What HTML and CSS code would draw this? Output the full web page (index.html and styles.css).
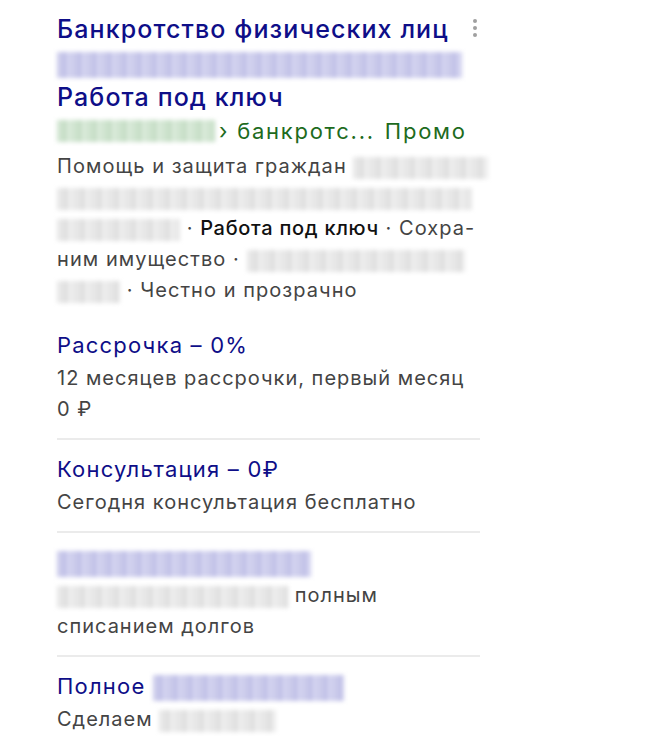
FILE: index.html
```html
<!DOCTYPE html>
<html lang="ru">
<head>
<meta charset="utf-8">
<link rel="stylesheet" href="styles.css">
</head>
<body>
<div class="ad">
  <div class="head">
    <div class="title">
      <div class="tline">Банкротство физических лиц</div>
      <div class="tline"><span class="blur blur-blue" style="width:405px"></span></div>
      <div class="tline">Работа под ключ</div>
    </div>
    <div class="dots"><i></i><i></i><i></i></div>
  </div>
  <div class="url">
    <span class="blur blur-green" style="width:158px"></span><span class="path">› банкротс...</span><span class="promo">Промо</span>
  </div>
  <div class="desc">
    <div class="dline">Помощь и защита граждан <span class="blur blur-gray" style="width:135px"></span></div>
    <div class="dline"><span class="blur blur-gray" style="width:415px"></span></div>
    <div class="dline"><span class="blur blur-gray" style="width:123px"></span> · <b>Работа под ключ</b> · Сохра-</div>
    <div class="dline">ним имущество · <span class="blur blur-gray" style="width:218px"></span></div>
    <div class="dline"><span class="blur blur-gray" style="width:63px"></span> · Честно и прозрачно</div>
  </div>
  <div class="sitelinks">
    <div class="sl">
      <div class="sl-title">Рассрочка – 0%</div>
      <div class="sl-text">12 месяцев рассрочки, первый месяц<br>0 ₽</div>
    </div>
    <div class="sl">
      <div class="sl-title">Консультация – 0₽</div>
      <div class="sl-text">Сегодня консультация бесплатно</div>
    </div>
    <div class="sl">
      <div class="sl-title"><span class="blur blur-blue" style="width:254px"></span></div>
      <div class="sl-text"><span class="blur blur-gray" style="width:231px"></span> полным<br>списанием долгов</div>
    </div>
    <div class="sl">
      <div class="sl-title">Полное <span class="blur blur-blue" style="width:191px"></span></div>
      <div class="sl-text">Сделаем <span class="blur blur-gray" style="width:117px"></span></div>
    </div>
  </div>
</div>
</body>
</html>
```
FILE: styles.css
```css
html, body {
  margin: 0;
  padding: 0;
  background: #fff;
}
body {
  font-family: Inter, "Liberation Sans", Arial, sans-serif;
}
.ad {
  width: 423px;
  padding: 12px 0 0 57px;
}
.head {
  display: flex;
  justify-content: space-between;
  align-items: flex-start;
}
.title {
  color: #0e0e88;
  font-size: 25px;
  font-weight: 500;
  line-height: 34px;
  letter-spacing: 1.1px;
}
.tline {
  height: 34px;
  white-space: nowrap;
}
.dots {
  display: flex;
  flex-direction: column;
  gap: 3px;
  padding: 7px 3px 0 0;
}
.dots i {
  display: block;
  width: 4px;
  height: 4px;
  border-radius: 50%;
  background: #a0a0a0;
}
.blur {
  display: inline-block;
  vertical-align: middle;
  height: 24px;
  filter: blur(2px);
}
.blur-blue {
  background: repeating-linear-gradient(90deg, #cbcbeb 0 6px, #bcbce5 6px 9px, #d2d2ef 9px 15px);
  height: 26px;
}
.blur-green {
  background: repeating-linear-gradient(90deg, #d0e4d0 0 6px, #c0dac0 6px 9px, #d8e9d8 9px 15px);
  height: 22px;
}
.blur-gray {
  background: repeating-linear-gradient(90deg, #e7e7e7 0 7px, #dadada 7px 10px, #ececec 10px 17px);
  height: 22px;
}
.url {
  display: flex;
  align-items: center;
  color: #1d6b1d;
  font-size: 22px;
  line-height: 30px;
  letter-spacing: 1.75px;
  margin-top: 2px;
}
.url .path {
  margin-left: 4px;
}
.url .promo {
  margin-left: 10px;
}
.desc {
  color: #444;
  font-size: 20px;
  line-height: 31px;
  letter-spacing: 1.05px;
  margin-top: 5px;
}
.dline {
  white-space: nowrap;
}
.desc b {
  color: #111;
  font-weight: 500;
  letter-spacing: 0.7px;
}
.sitelinks {
  margin-top: 22px;
}
.sl {
  padding: 12px 0 13px;
  border-top: 2px solid #ebebeb;
}
.sl:first-child {
  border-top: none;
  padding-top: 0;
}
.sl-title {
  color: #0e0e88;
  font-size: 22px;
  line-height: 35px;
  letter-spacing: 1.2px;
  white-space: nowrap;
}
.sl-text {
  color: #444;
  font-size: 20px;
  line-height: 31px;
  letter-spacing: 1px;
  white-space: nowrap;
}
```
